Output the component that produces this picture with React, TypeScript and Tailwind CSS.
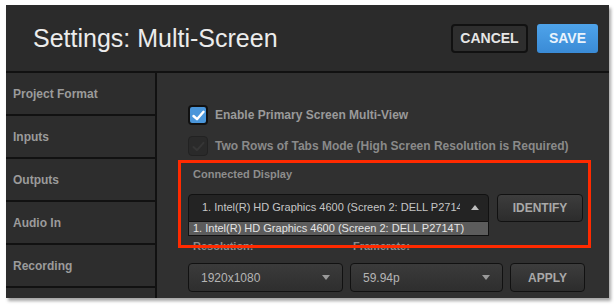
import React from 'react';

const navItems = ['Project Format', 'Inputs', 'Outputs', 'Audio In', 'Recording', ''];

function Caret({ up = false }: { up?: boolean }) {
  return (
    <svg width="8" height="5" viewBox="0 0 8 5" className="shrink-0">
      {up ? <path d="M0 5 L4 0 L8 5 Z" fill="#bdbdbd" /> : <path d="M0 0 L4 5 L8 0 Z" fill="#9a9a9a" />}
    </svg>
  );
}

function DarkButton({ label, className = '' }: { label: string; className?: string }) {
  return (
    <button
      className={`flex items-center justify-center rounded-[4px] border border-[#111] bg-gradient-to-b from-[#3d3d3d] to-[#2c2c2c] text-[12px] font-bold text-[#a9a9a9] ${className}`}
    >
      {label}
    </button>
  );
}

export default function App() {
  return (
    <div className="h-[308px] w-[614px] bg-white pl-[6px] pt-[5px] font-['Liberation_Sans',Arial,sans-serif]">
      <div className="flex h-[293px] w-[603px] flex-col overflow-hidden bg-[#2b2b2b] shadow-[2px_3px_3px_rgba(0,0,0,0.35)]">
        {/* Header */}
        <div className="flex h-[68px] shrink-0 items-center border-b-2 border-[#111] pl-[27px] pr-[11px]">
          <h1 className="flex-1 text-[25px] leading-none text-[#ececec]">Settings: Multi-Screen</h1>
          <button className="mr-[9px] h-[29px] w-[77px] rounded-[4px] border-2 border-[#111] bg-[#2e2e2e] text-[14px] font-bold text-[#e6e6e6]">
            CANCEL
          </button>
          <button className="h-[29px] w-[61px] rounded-[3px] bg-gradient-to-b from-[#4ea3ea] to-[#3a8bd6] text-[14px] font-bold text-[#e9f3fc]">
            SAVE
          </button>
        </div>

        <div className="flex flex-1 overflow-hidden">
          {/* Sidebar */}
          <div className="flex w-[151px] shrink-0 flex-col gap-[2px] border-r-2 border-[#111] bg-[#111]">
            {navItems.map((item, i) => (
              <div key={i} className="flex h-[41px] shrink-0 items-center bg-[#2d2d2d] pl-[7px] text-[12px] font-bold text-[#9b9b9b]">
                {item}
              </div>
            ))}
          </div>

          {/* Main */}
          <div className="relative flex-1 bg-[#303030] pl-[31px] pt-[32px]">
            <div className="flex items-center gap-[7px]">
              <div className="flex h-[20px] w-[20px] items-center justify-center rounded-[4px] border-2 border-[#111] bg-[#4a96da]">
                <svg width="13" height="11" viewBox="0 0 13 11">
                  <path d="M1.5 6 L5 9.2 L11.5 1.8" stroke="white" strokeWidth="2.4" fill="none" strokeLinecap="round" strokeLinejoin="round" />
                </svg>
              </div>
              <span className="text-[12px] font-bold text-[#9a9a9a]">Enable Primary Screen Multi-View</span>
            </div>

            <div className="mt-[11px] flex items-center gap-[7px]">
              <div className="flex h-[20px] w-[20px] items-center justify-center rounded-[4px] border border-[#222] bg-[#2a2a2a]">
                <svg width="13" height="11" viewBox="0 0 13 11">
                  <path d="M1.5 6 L5 9.2 L11.5 1.8" stroke="#363636" strokeWidth="2" fill="none" strokeLinecap="round" strokeLinejoin="round" />
                </svg>
              </div>
              <span className="text-[12px] font-bold text-[#8a8a8a]">Two Rows of Tabs Mode (High Screen Resolution is Required)</span>
            </div>

            <div className="mt-[10px] pl-[5px] text-[11px] font-bold text-[#8d8d8d]">Connected Display</div>

            <div className="mt-[11px] flex gap-[8px]">
              <div className="relative">
                <div className="flex h-[28px] w-[301px] items-center justify-between rounded-t-[4px] border border-[#111] bg-[#232323] pl-[13px] pr-[9px]">
                  <span className="w-[258px] overflow-hidden whitespace-nowrap text-[11px] text-[#c6c6c6]">
                    1. Intel(R) HD Graphics 4600 (Screen 2: DELL P2714T)
                  </span>
                  <Caret up />
                </div>
                <div className="absolute left-0 top-[28px] z-10 flex h-[14px] w-[301px] items-center overflow-hidden whitespace-nowrap border border-t-0 border-[#111] bg-[#5c5c5c] pl-[4px] text-[11px] leading-none text-[#e4e4e4]">
                  1. Intel(R) HD Graphics 4600 (Screen 2: DELL P2714T)
                </div>
              </div>
              <DarkButton label="IDENTIFY" className="h-[28px] w-[86px] text-[#9c9c9c]" />
            </div>

            <div className="mt-[16px] flex pl-[5px] text-[11px] font-bold text-[#8d8d8d]">
              <span className="w-[160px]">Resolution:</span>
              <span>Framerate:</span>
            </div>

            <div className="mt-[9px] flex gap-[7px]">
              <div className="flex h-[29px] w-[155px] items-center justify-between rounded-[4px] border border-[#111] bg-gradient-to-b from-[#3b3b3b] to-[#2e2e2e] pl-[12px] pr-[12px] text-[12px] text-[#b4b4b4]">
                1920x1080
                <Caret />
              </div>
              <div className="flex h-[29px] w-[153px] items-center justify-between rounded-[4px] border border-[#111] bg-gradient-to-b from-[#3b3b3b] to-[#2e2e2e] pl-[12px] pr-[12px] text-[12px] text-[#b4b4b4]">
                59.94p
                <Caret />
              </div>
              <DarkButton label="APPLY" className="h-[29px] w-[75px]" />
            </div>

            {/* Annotation highlight */}
            <div className="pointer-events-none absolute left-[21px] top-[87px] z-20 h-[88px] w-[413px] border-[3px] border-[#ff2a00]" />
          </div>
        </div>
      </div>
    </div>
  );
}
